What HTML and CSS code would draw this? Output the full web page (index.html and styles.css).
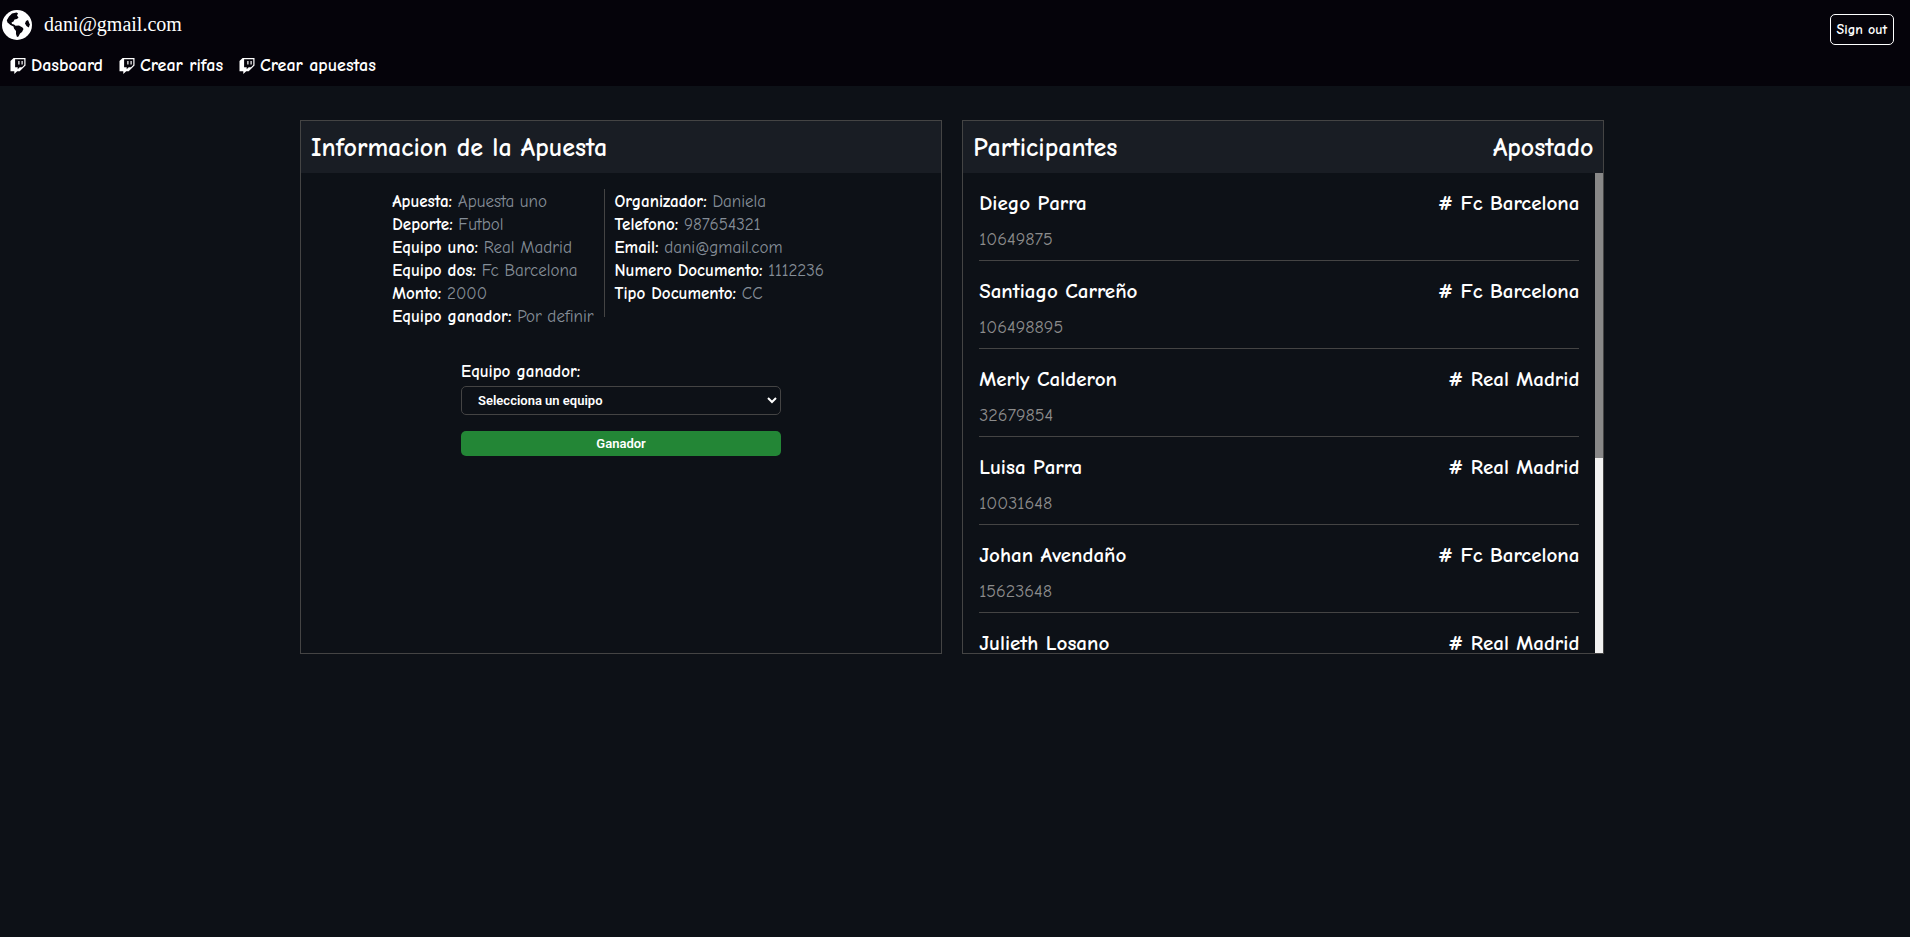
FILE: index.html
```html
<!DOCTYPE html>
<html lang="es">
<head>
<meta charset="utf-8">
<title>Apuesta</title>
<link rel="stylesheet" href="styles.css">
</head>
<body>
<svg class="sprite" aria-hidden="true">
  <symbol id="twitch" viewBox="0 0 16 16">
    <path fill="currentColor" fill-rule="evenodd" d="M3.600 0 .5 3v10.200h3.800V16l2.900-2.800h2.500L15.500 7.500V0ZM14.300 7 12 9.200H9.700l-2 2v-2H5.100V1.200h9.200Z"/>
    <path fill="currentColor" d="M11.500 3h1.200v3.600h-1.200ZM8.300 3h1.200v3.600H8.300Z"/>
  </symbol>
</svg>
<header class="topbar">
  <div>
    <div class="brand">
      <svg class="globe" viewBox="0 0 30 30" aria-hidden="true">
        <circle cx="15" cy="15" r="15" fill="#fff"/>
        <path fill="#05030a" d="M10 3.500 14.500 2.500 16 3.200 15 5.500 16.500 7.500 15 9 12.500 9.500 11.500 11.500 9.500 12.500 10 14 12 14.500 13.500 15.800 17 15.500 20.500 17.500 21.500 19 20 22 18 23.500 16.500 26.500 15 27 14 24 14 21 12 18.500 11.500 16.500 8.500 15 5.500 12.500 4.800 10.200 7 6.500Z"/>
        <path fill="#05030a" d="M26 10 24 11 23 13.500 24.500 16 26.800 17.500 27.800 14.500Z"/>
      </svg>
      <span>dani@gmail.com</span>
    </div>
    <nav class="nav">
      <a href="#"><svg class="icon"><use href="#twitch"/></svg>Dasboard</a>
      <a href="#"><svg class="icon"><use href="#twitch"/></svg>Crear rifas</a>
      <a href="#"><svg class="icon"><use href="#twitch"/></svg>Crear apuestas</a>
    </nav>
  </div>
  <button class="signout" type="button">Sign out</button>
</header>
<main class="panels">
  <section class="panel">
    <div class="panel-head"><h2>Informacion de la Apuesta</h2></div>
    <div class="info">
      <dl class="facts">
        <div><dt>Apuesta:</dt> <dd>Apuesta uno</dd></div>
        <div><dt>Deporte:</dt> <dd>Futbol</dd></div>
        <div><dt>Equipo uno:</dt> <dd>Real Madrid</dd></div>
        <div><dt>Equipo dos:</dt> <dd>Fc Barcelona</dd></div>
        <div><dt>Monto:</dt> <dd>2000</dd></div>
        <div><dt>Equipo ganador:</dt> <dd>Por definir</dd></div>
      </dl>
      <dl class="facts organizer">
        <div><dt>Organizador:</dt> <dd>Daniela</dd></div>
        <div><dt>Telefono:</dt> <dd>987654321</dd></div>
        <div><dt>Email:</dt> <dd>dani@gmail.com</dd></div>
        <div><dt>Numero Documento:</dt> <dd>1112236</dd></div>
        <div><dt>Tipo Documento:</dt> <dd>CC</dd></div>
      </dl>
    </div>
    <form class="winner">
      <label for="team">Equipo ganador:</label>
      <select id="team"><option>Selecciona un equipo</option><option>Real Madrid</option><option>Fc Barcelona</option></select>
      <button type="button">Ganador</button>
    </form>
  </section>
  <section class="panel">
    <div class="panel-head"><h2>Participantes</h2><h2>Apostado</h2></div>
    <div class="scroller">
      <ul class="people">
        <li><div class="bet"><span>Diego Parra</span><span># Fc Barcelona</span></div><div class="doc">10649875</div></li>
        <li><div class="bet"><span>Santiago Carreño</span><span># Fc Barcelona</span></div><div class="doc">106498895</div></li>
        <li><div class="bet"><span>Merly Calderon</span><span># Real Madrid</span></div><div class="doc">32679854</div></li>
        <li><div class="bet"><span>Luisa Parra</span><span># Real Madrid</span></div><div class="doc">10031648</div></li>
        <li><div class="bet"><span>Johan Avendaño</span><span># Fc Barcelona</span></div><div class="doc">15623648</div></li>
        <li><div class="bet"><span>Julieth Losano</span><span># Real Madrid</span></div></li>
      </ul>
      <div class="track" aria-hidden="true"><div class="thumb"></div></div>
    </div>
  </section>
</main>
</body>
</html>
```
FILE: styles.css
```css
* { box-sizing: border-box; }
body {
  margin: 0;
  background: #0d1117;
  color: #fff;
  font: 17px/23px "Comic Neue", Lato, sans-serif;
}
h2, dl, dd, ul { margin: 0; padding: 0; }
.sprite { display: none; }

.topbar {
  display: flex;
  justify-content: space-between;
  align-items: flex-start;
  padding: 9px 16px 9px 2px;
  background: #05030a;
}
.brand {
  display: flex;
  align-items: center;
  gap: 12px;
  height: 31px;
  font: 20px/30px "Liberation Serif", serif;
}
.brand span { padding-bottom: 2px; }
.globe { width: 30px; height: 30px; }
.nav { display: flex; gap: 16px; padding: 14px 8px 0; }
.nav a {
  display: flex;
  align-items: center;
  gap: 5px;
  color: #fff;
  font-size: 18px;
  font-weight: 700;
  text-decoration: none;
}
.icon { width: 16px; height: 16px; }
.signout {
  margin-top: 5px;
  padding: 1px 6px 0;
  height: 31px;
  border: 1px solid #fff;
  border-radius: 5px;
  background: #05030a;
  color: #fff;
  font: 700 14px/20px "Comic Neue", Lato, sans-serif;
}

.panels {
  display: grid;
  grid-template-columns: 1fr 1fr;
  gap: 20px;
  padding: 34px 16% 0 300px;
}
.panel { border: 1px solid #444; }
.panel-head {
  display: flex;
  justify-content: space-between;
  padding: 11px 10px 9px;
  background: #191d24;
}
.panel-head h2 { font-size: 26px; line-height: 32px; }

.info { display: flex; justify-content: center; padding: 16px 10px 0; }
.facts { padding: 1px 10px 0 0; }
.facts dt, .facts dd { display: inline; }
.facts dt { font-weight: 700; }
.facts dd { color: #858e98; }
.organizer {
  height: 128px;
  padding: 1px 26px 0 10px;
  border-left: 1px solid #444;
}

.winner { display: flex; flex-direction: column; width: 50%; margin: 32px auto 0; }
.winner label { margin-bottom: 3px; font-weight: 700; }
.winner select {
  height: 29px;
  padding: 0 0 0 12px;
  border: 1px solid #444;
  border-radius: 5px;
  background: #0d1117;
  color: #fff;
  font: 600 13px/16px Roboto, sans-serif;
}
.winner button {
  height: 25px;
  margin-top: 16px;
  border: 0;
  border-radius: 5px;
  background: #238636;
  color: #fff;
  font: 600 13px/16px Roboto, sans-serif;
}

.scroller { display: flex; height: 480px; }
.people {
  flex: 1;
  padding: 0 16px;
  overflow-y: auto;
  scrollbar-width: none;
  list-style: none;
}
.track { width: 8px; background: #f1f1f1; }
.thumb { height: 285px; background: #888; }
.people li { height: 88px; padding-top: 15px; border-bottom: 1px solid #444; }
.bet {
  display: flex;
  justify-content: space-between;
  font-size: 21px;
  font-weight: 700;
  line-height: 30px;
}
.doc { padding-top: 10px; color: #8c8c8c; font-size: 18px; }
```
